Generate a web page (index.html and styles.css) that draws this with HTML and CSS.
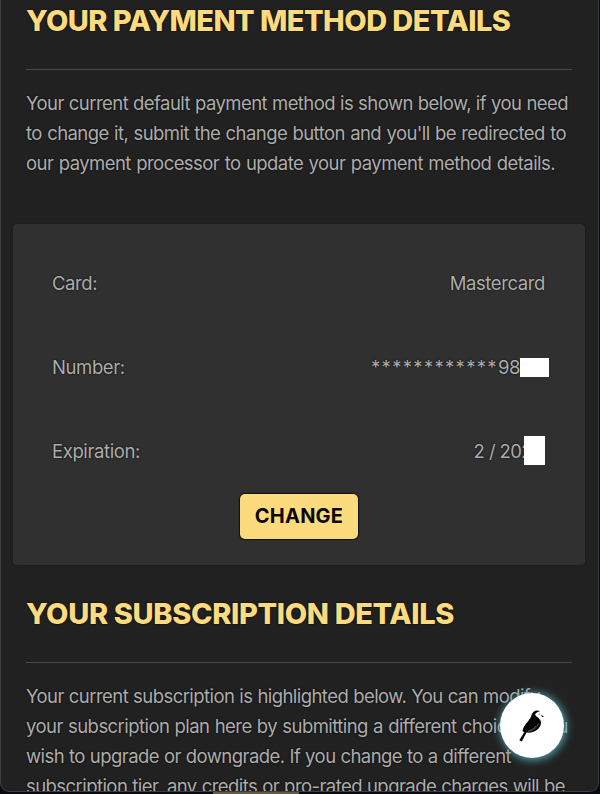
FILE: index.html
```html
<!DOCTYPE html>
<html lang="en">
<head>
<meta charset="utf-8">
<title>Payment method</title>
<link rel="stylesheet" href="styles.css">
</head>
<body>
<main class="window">
  <section class="section">
    <h2 class="heading"><span class="h-payment">YOUR PAYMENT METHOD DETAILS</span></h2>
    <p class="copy">
      <span class="line w542">Your current default payment method is shown below, if you need</span>
      <span class="line w541">to change it, submit the change button and you'll be redirected to</span>
      <span class="line w530">our payment processor to update your payment method details.</span>
    </p>
  </section>
  <section class="card">
    <dl class="details">
      <div class="row"><dt>Card:</dt><dd>Mastercard</dd></div>
      <div class="row number"><dt>Number:</dt><dd><span class="stars">************</span>98<span class="redact wide"></span></dd></div>
      <div class="row expiry"><dt>Expiration:</dt><dd>2 / 202<span class="redact tall"></span></dd></div>
    </dl>
    <button class="change">CHANGE</button>
  </section>
  <section class="section">
    <h2 class="heading"><span class="h-subscription">YOUR SUBSCRIPTION DETAILS</span></h2>
    <p class="copy">
      <span class="line w515">Your current subscription is highlighted below. You can modify</span>
      <span class="line w543">your subscription plan here by submitting a different choice if you</span>
      <span class="line w485">wish to upgrade or downgrade. If you change to a different</span>
      <span class="line w540">subscription tier, any credits or pro-rated upgrade charges will be</span>
    </p>
  </section>
</main>
<div class="accent"></div>
<div class="bird">
  <svg width="64" height="64" viewBox="0 0 64 64" aria-hidden="true">
    <path d="M40 18.3C36 16.4 32.2 18.6 31.2 23C30.3 27 24 31 22.3 38.2L24.4 39L19.3 47.2L21.8 48.4L26.5 39.6C35 40.5 41 35 41 29.5C41 26 36.5 24 35 21.8C35.6 19.8 37.8 19 40 18.3Z" fill="#050505"/>
    <path d="M38.5 30C37.5 34.5 33 38 28 38.5M36 33C34.5 35.5 31.5 37 28.5 37.5" fill="none" stroke="#777" stroke-width=".6"/>
    <path d="M41 22L44 23.3L42 24.3Z" fill="#111"/>
    <circle cx="39.3" cy="21" r=".6" fill="#333"/>
  </svg>
</div>
</body>
</html>
```
FILE: styles.css
```css
* { box-sizing: border-box; }
body {
  margin: 0;
  height: 794px;
  overflow: hidden;
  position: relative;
  background: #080812;
  color: #adadad;
  font: 400 18.5px/30px Inter, "Liberation Sans", sans-serif;
}
.window {
  width: 599px;
  height: 792px;
  overflow: hidden;
  padding: 0 13px 0 12px;
  background: #212121;
  border: solid #3e3e3e;
  border-width: 0 1px 1px;
  border-radius: 0 0 9px 9px;
}
.section { padding: 0 13px; }
.heading {
  display: flex;
  align-items: flex-start;
  height: 70px;
  margin: 0 0 18px;
  padding-top: 5px;
  border-bottom: 1px solid #484848;
  color: #fbdb7e;
  font-size: 29px;
  font-weight: 760;
  line-height: 31px;
  white-space: nowrap;
  text-shadow: 0 0 2px #000;
}
.h-payment { letter-spacing: -.53px; }
.h-subscription { letter-spacing: -.35px; }
.copy { margin: 0; text-shadow: 0 0 2px #000; }
.line {
  display: block;
  white-space: nowrap;
  letter-spacing: -.56px;
  text-align-last: justify;
}
.w542 { width: 542px; }
.w541 { width: 540px; }
.w530 { width: 529px; }
.w515 { width: 514px; }
.w543 { width: 542px; }
.w485 { width: 485px; }
.w540 { width: 539px; }
.card {
  height: 341px;
  margin: 46px 0 28px;
  padding: 44px 39px 0;
  background: #303030;
  border-radius: 4px;
  box-shadow: 0 0 2px #151515;
}
.details { margin: 0; text-shadow: 0 0 2px #000; letter-spacing: -.4px; }
.row { display: flex; justify-content: space-between; height: 84px; }
dd { display: flex; margin: 0 1px 0 0; }
.number dd { margin-right: -3px; }
.expiry dd { letter-spacing: -.6px; }
.stars { letter-spacing: 1.3px; }
.redact { background: #fff; }
.wide { width: 29px; height: 19px; margin-top: 6px; }
.tall { position: relative; width: 21px; height: 29px; margin: 0 0 0 -8px; }
.change {
  display: block;
  width: 118px;
  height: 45px;
  margin: -26px auto 0;
  padding: 0;
  border: 0;
  border-radius: 5px;
  background: #fbdb7e;
  box-shadow: 0 0 1px 1px #111;
  color: #090804;
  font: 750 20px/43px Inter, sans-serif;
  letter-spacing: .2px;
}
.bird {
  position: absolute;
  left: 500px;
  top: 693px;
  width: 64px;
  height: 65px;
  border-radius: 50%;
  background: #fff;
  box-shadow: 1px 1px 9px 1px #55a3ac;
}
.accent {
  position: absolute;
  left: 213px;
  top: 792px;
  width: 86px;
  height: 2px;
  background: #665b3d;
}
```
